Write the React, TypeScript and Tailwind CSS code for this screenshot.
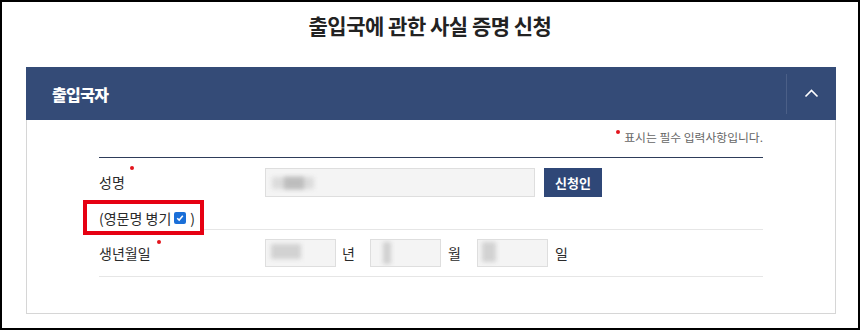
import React from "react";

function Dot({ className }: { className: string }) {
	return (
		<span
			className={`absolute h-[4px] w-[4px] rounded-full bg-[#e3141c] ${className}`}
		/>
	);
}

function Blur({ className }: { className: string }) {
	return <div className={`absolute blur-[2px] ${className}`} />;
}

function Field({
	w,
	h,
	children,
}: {
	w: string;
	h: string;
	children?: React.ReactNode;
}) {
	return (
		<div
			className={`relative overflow-hidden border border-[#dedede] bg-[#f4f4f4] ${w} ${h}`}
		>
			{children}
		</div>
	);
}

export default function App() {
	return (
		<div className="relative box-border h-[330px] w-[860px] overflow-hidden border-2 border-black bg-white font-['Noto_Sans_CJK_KR','Noto_Sans',sans-serif] text-[#2a2a2a]">
			<h1 className="pt-[8px] text-center text-[21px] font-bold leading-[30px] tracking-[-0.5px] text-[#222]">
				출입국에 관한 사실 증명 신청
			</h1>

			<div className="ml-[24px] mt-[27px] w-[810px]">
				{/* panel header */}
				<div className="flex h-[53px] items-center bg-[#344b77]">
					<div className="flex-1 pl-[26px] text-[16px] font-extrabold tracking-[-0.6px] text-white">
						출입국자
					</div>
					<div className="h-[40px] w-px bg-[#4b5f87]" />
					<div className="flex w-[49px] items-center justify-center">
						<svg width="15" height="9" viewBox="0 0 15 9" fill="none">
							<polyline
								points="1.5,7.5 7.5,1.5 13.5,7.5"
								stroke="white"
								strokeWidth="1.6"
							/>
						</svg>
					</div>
				</div>

				{/* panel body */}
				<div className="h-[194px] border-x border-b border-[#d6d6d6] px-[72px]">
					<div className="relative flex justify-end pt-[9px] text-[11.8px] leading-[16px] text-[#666]">
						<span className="relative">
							<Dot className="left-[-8px] top-[1px]" />
							표시는 필수 입력사항입니다.
						</span>
					</div>

					<div className="mt-[12px] border-t border-[#2e3d5a]">
						<div className="border-b border-[#e6e6e6] pb-[1px] pt-[10px]">
							<div className="flex items-center">
								<div className="w-[166px] text-[14px]">
									<span className="relative">
										성명
										<Dot className="right-[-9px] top-[-6px]" />
									</span>
								</div>
								<Field w="w-[270px]" h="h-[29px]">
									<Blur className="left-[6px] top-[8px] h-[12px] w-[42px] bg-[#dcdcdc]" />
									<Blur className="left-[18px] top-[8px] h-[12px] w-[20px] bg-[#bdbdbd]" />
								</Field>
								<button className="ml-[9px] h-[29px] w-[58px] bg-[#2f4777] text-[13px] font-bold text-white">
									신청인
								</button>
							</div>
							<div className="relative mt-[11px] h-[20px]">
								<div className="absolute left-[-16px] top-[-8px] h-[35px] w-[121px] border-4 border-[#e60012] bg-white" />
								<div className="relative flex h-[20px] items-center text-[14px]">
									(영문명 병기
									<span className="ml-[3px] flex h-[12px] w-[12px] items-center justify-center rounded-[2px] bg-[#1a6fd8]">
										<svg width="8" height="8" viewBox="0 0 8 8" fill="none">
											<polyline
												points="1.2,4.2 3.2,6.1 6.8,1.8"
												stroke="white"
												strokeWidth="1.5"
											/>
										</svg>
									</span>
									<span className="ml-[4px]">)</span>
								</div>
							</div>
						</div>

						<div className="flex items-center border-b border-[#e6e6e6] py-[9px]">
							<div className="w-[166px] text-[14px]">
								<span className="relative">
									생년월일
									<Dot className="right-[-10px] top-[-3px]" />
								</span>
							</div>
							<Field w="w-[71px]" h="h-[28px]">
								<Blur className="left-[5px] top-[4px] h-[15px] w-[30px] bg-[#d2d2d2]" />
							</Field>
							<span className="ml-[6px] w-[28px] text-[14px]">년</span>
							<Field w="w-[71px]" h="h-[28px]">
								<Blur className="left-[12px] top-[2px] h-[22px] w-[8px] bg-[#d0d0d0]" />
							</Field>
							<span className="ml-[7px] w-[29px] text-[14px]">월</span>
							<Field w="w-[71px]" h="h-[28px]">
								<Blur className="left-[4px] top-[2px] h-[20px] w-[14px] bg-[#d2d2d2]" />
							</Field>
							<span className="ml-[7px] text-[14px]">일</span>
						</div>
					</div>
				</div>
			</div>
		</div>
	);
}
